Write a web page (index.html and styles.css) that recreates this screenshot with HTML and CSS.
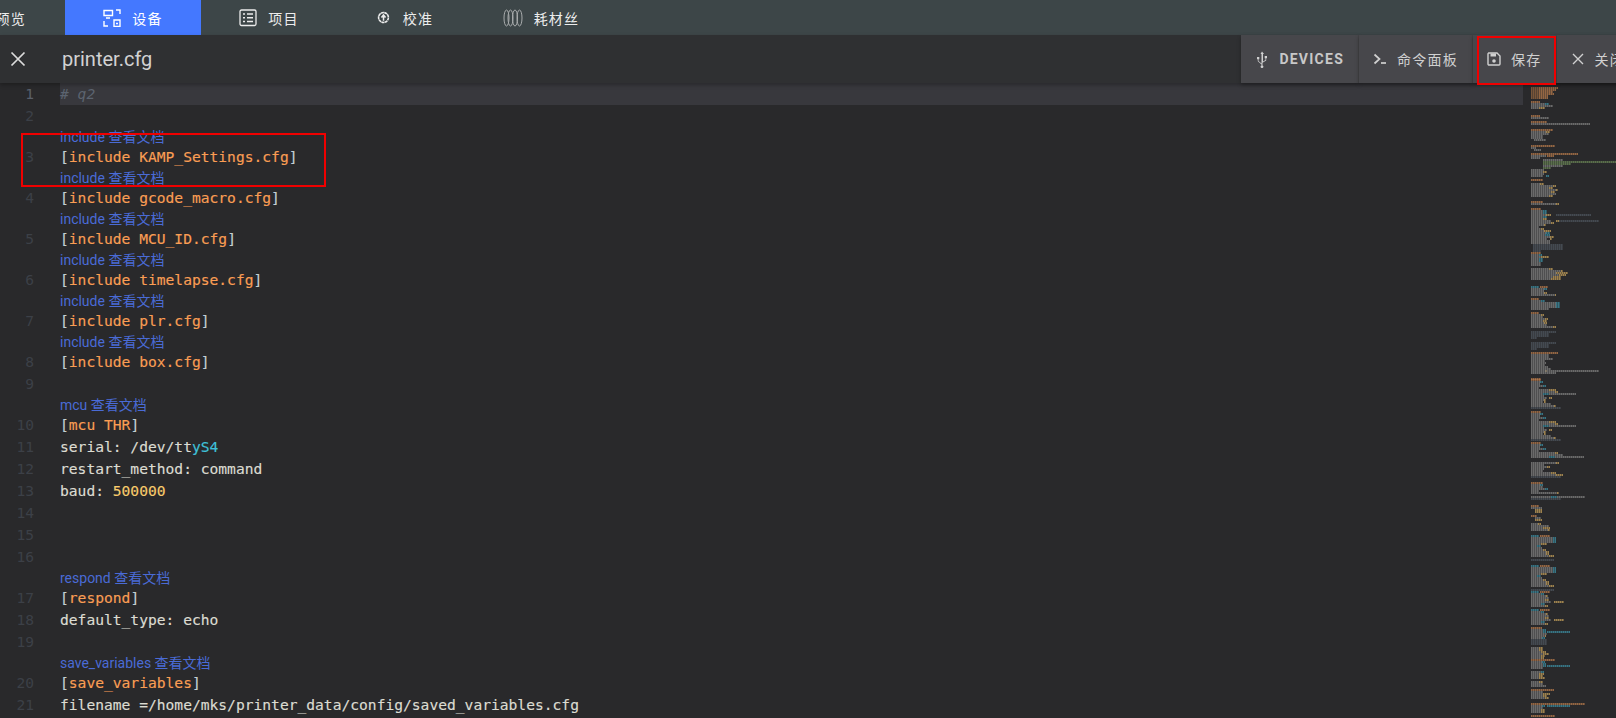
FILE: index.html
```html
<!DOCTYPE html>
<html lang="zh">
<head>
<meta charset="utf-8">
<title>printer.cfg</title>
<link rel="stylesheet" href="styles.css">
</head>
<body>
<nav class="nav">
  <a class="tab"><span class="label">预览</span></a>
  <a class="tab active">
    <svg class="nav-ico" viewBox="0 0 18 18" width="18" height="18"><path d="M1 1.500h8.500v5H1zM3 9h4M1 12v5h4M13 1h4v4M11 11h6v6.500h-6zM13 14.500h2" fill="none" stroke="currentColor" stroke-width="1.400"/></svg>
    <span class="label">设备</span></a>
  <a class="tab">
    <svg class="nav-ico" viewBox="0 0 18 18" width="18" height="18"><rect x="1" y="1" width="16" height="15.500" rx="1.500" fill="none" stroke="currentColor" stroke-width="1.300"/><path d="M4 5h2M8 5h6M4 8.700h2M8 8.700h6M4 12.500h2M8 12.500h6" stroke="currentColor" stroke-width="1.400"/></svg>
    <span class="label">项目</span></a>
  <a class="tab">
    <svg class="nav-ico small" viewBox="0 0 14 14" width="13" height="13"><circle cx="7" cy="7" r="5.300" fill="none" stroke="currentColor" stroke-width="1.700" stroke-dasharray="3.200 .4"/><path d="M7 10.500V5M4.800 7L7 4.200 9.200 7" fill="none" stroke="currentColor" stroke-width="1.600"/></svg>
    <span class="label">校准</span></a>
  <a class="tab">
    <svg class="nav-ico" viewBox="0 0 20 18" width="20" height="18"><g fill="none" stroke="#a9acad" stroke-width="1"><ellipse cx="3.500" cy="9" rx="2.500" ry="8"/><ellipse cx="7.500" cy="9" rx="2.500" ry="8"/><ellipse cx="12" cy="9" rx="2.500" ry="8"/><ellipse cx="16.500" cy="9" rx="2.500" ry="8"/></g></svg>
    <span class="label">耗材丝</span></a>
</nav>

<header class="toolbar">
  <button class="close-btn"><svg viewBox="0 0 16 16" width="16" height="16"><path d="M1.500 1.500l13 13M14.500 1.500l-13 13" stroke="#dcdcdc" stroke-width="1.700" fill="none"/></svg></button>
  <h1 class="file-title">printer.cfg</h1>
  <div class="actions">
    <button class="act"><svg class="act-ico" viewBox="0 0 18 18" width="18" height="18"><path d="M9 1.500L7.500 4h1v9.500L5.500 11V9.300h.8V7H4v2.300h.8v2l3.700 3.200v1.100a1.300 1.300 0 1 0 1 0V12.800l3.700-2.300V8.300h.8V6h-2.300v2.300h.8v1.800l-2.500 1.500V4h1z" fill="currentColor"/></svg><span class="strong">DEVICES</span></button>
    <button class="act"><svg class="act-ico" viewBox="0 0 18 18" width="18" height="18"><path d="M3.500 4.500L8.500 9l-5 4.500" fill="none" stroke="currentColor" stroke-width="1.700"/><path d="M10 13h5" stroke="currentColor" stroke-width="1.700"/></svg><span>命令面板</span></button>
    <button class="act"><svg class="act-ico" viewBox="0 0 18 18" width="18" height="18"><path d="M3.500 3h8.500l3 3v8a1 1 0 0 1-1 1h-10a1 1 0 0 1-1-1V4a1 1 0 0 1 .5-1z" fill="none" stroke="currentColor" stroke-width="1.400"/><path d="M5.500 3.500h5.500v3H5.500z" fill="currentColor"/><circle cx="9" cy="11" r="1.800" fill="currentColor"/></svg><span>保存</span></button>
    <button class="act"><svg class="act-ico" viewBox="0 0 18 18" width="18" height="18"><path d="M4 4l10 10M14 4L4 14" stroke="currentColor" stroke-width="1.400" fill="none"/></svg><span>关闭</span></button>
  </div>
</header>

<main class="editor">
  <div class="lines">
    <div class="row current"><span class="num on">1</span><code class="code"><i class="cm"># q2</i></code></div>
    <div class="row"><span class="num">2</span><code class="code"></code></div>
    <div class="lens">include 查看文档</div>
    <div class="row"><span class="num">3</span><code class="code"><b class="br">[</b><b class="sec">include KAMP_Settings.cfg</b><b class="br">]</b></code></div>
    <div class="lens">include 查看文档</div>
    <div class="row"><span class="num">4</span><code class="code"><b class="br">[</b><b class="sec">include gcode_macro.cfg</b><b class="br">]</b></code></div>
    <div class="lens">include 查看文档</div>
    <div class="row"><span class="num">5</span><code class="code"><b class="br">[</b><b class="sec">include MCU_ID.cfg</b><b class="br">]</b></code></div>
    <div class="lens">include 查看文档</div>
    <div class="row"><span class="num">6</span><code class="code"><b class="br">[</b><b class="sec">include timelapse.cfg</b><b class="br">]</b></code></div>
    <div class="lens">include 查看文档</div>
    <div class="row"><span class="num">7</span><code class="code"><b class="br">[</b><b class="sec">include plr.cfg</b><b class="br">]</b></code></div>
    <div class="lens">include 查看文档</div>
    <div class="row"><span class="num">8</span><code class="code"><b class="br">[</b><b class="sec">include box.cfg</b><b class="br">]</b></code></div>
    <div class="row"><span class="num">9</span><code class="code"></code></div>
    <div class="lens">mcu 查看文档</div>
    <div class="row"><span class="num">10</span><code class="code"><b class="br">[</b><b class="sec">mcu THR</b><b class="br">]</b></code></div>
    <div class="row"><span class="num">11</span><code class="code">serial: /dev/tt<b class="cy">yS4</b></code></div>
    <div class="row"><span class="num">12</span><code class="code">restart_method: command</code></div>
    <div class="row"><span class="num">13</span><code class="code">baud: <b class="nb">500000</b></code></div>
    <div class="row"><span class="num">14</span><code class="code"></code></div>
    <div class="row"><span class="num">15</span><code class="code"></code></div>
    <div class="row"><span class="num">16</span><code class="code"></code></div>
    <div class="lens">respond 查看文档</div>
    <div class="row"><span class="num">17</span><code class="code"><b class="br">[</b><b class="sec">respond</b><b class="br">]</b></code></div>
    <div class="row"><span class="num">18</span><code class="code">default_type: echo</code></div>
    <div class="row"><span class="num">19</span><code class="code"></code></div>
    <div class="lens">save_variables 查看文档</div>
    <div class="row"><span class="num">20</span><code class="code"><b class="br">[</b><b class="sec">save_variables</b><b class="br">]</b></code></div>
    <div class="row"><span class="num">21</span><code class="code">filename =/home/mks/printer_data/config/saved_variables.cfg</code></div>
  </div>
  <aside class="minimap">
    <svg viewBox="0 0 85 635" width="85" height="635">
      <defs>
        <g id="blk">
          <path class="o" d="M0 0h10"/>
          <path class="g" d="M0 2h9M0 4h9M0 6h12M0 8h8M0 10h18M0 12h24M0 14h12M18 14h27M0 16h13M0 18h16M0 20h13M0 22h12M0 24h20M0 26h23"/>
          <path class="c" d="M9 2h3M12 6h3M12 14h6"/>
          <path class="y" d="M18 10h7M24 12h3M18 18h3M13 20h2M13 22h2M23 26h2"/>
          <path class="d" d="M0 28h30"/>
        </g>
        <g id="tc">
          <path class="c" d="M0 0h8M22 2h3M22 4h3M22 6h3M6 10h4"/>
          <path class="o" d="M9 0h10"/>
          <path class="g" d="M0 2h22M0 4h22M0 6h22M0 8h10M0 10h6M0 12h11M0 14h12M0 16h15M0 18h15M0 20h18"/>
          <path class="y" d="M10 8h6M12 14h3M15 16h3M15 18h3M18 20h5"/>
          <path class="d" d="M0 24h23"/>
        </g>
        <g id="sc">
          <path class="c" d="M0 0h8M10 2h3M10 12h4"/>
          <path class="o" d="M9 0h10"/>
          <path class="g" d="M0 2h10M0 4h15M0 6h18M0 8h14M0 10h20M0 12h10M0 14h14"/>
          <path class="y" d="M15 4h2M14 8h4M23 10h10M14 14h3"/>
        </g>
      </defs>
      <path class="g" d="M1 1h5"/>
      <path class="o2" d="M0 5h8M0 7h8M0 9h8M0 11h8M0 13h8M0 15h8"/>
      <path class="o" d="M8 5h19M8 7h17M8 9h14M8 11h15M8 13h9M8 15h9M0 19h9M0 33h9M0 39h16M0 47h22M0 63h24M0 71h47M16 73h7M0 97h12M0 119h12M0 126h10M9 204h8M0 216h8M0 230h8M0 270h27M0 296h10"/>
      <path class="g" d="M0 21h14M0 23h22M0 25h8M0 35h18M0 41h59M0 49h15M0 51h18M0 53h12M0 55h12M3 57h12M0 65h5M3 67h7M0 73h15M0 75h9M12 77h20M12 83h20M0 87h13M0 89h12M0 91h13M0 93h12M0 101h9M0 103h22M0 105h18M0 107h25M0 109h20M0 111h25M0 113h18M0 121h25"/>
      <path class="c" d="M14 21h4M15 93h3M12 128h4M12 130h4M12 134h4M15 150h4M14 152h5M8 172h3M8 176h4M8 178h4M0 204h8M13 206h3M10 218h4M25 220h4M25 222h4M25 224h4"/>
      <path class="y" d="M8 25h6M15 49h4M12 89h4M9 101h4M22 103h3M18 105h4M25 107h2M20 109h4M18 113h4M25 121h3M15 132h5M12 136h4M25 138h3M20 140h3M13 142h2M10 146h3M13 148h7M19 154h4M19 156h2M10 174h8M18 186h4M30 188h2M25 190h12M28 192h7M22 194h8M20 196h10M13 210h3M24 212h1M10 232h3M14 236h3M12 238h4M13 240h3M22 244h3M14 288h2"/>
      <path class="gr" d="M12 79h73M12 81h28M12 85h8"/>
      <path class="g" d="M0 128h12M0 130h12M0 132h15M0 134h12M0 136h12M0 138h20M0 140h20M0 142h13M0 144h8M0 146h10M0 148h13M0 150h15M0 152h14M0 154h19M0 156h16M0 158h19M0 160h19M0 172h8M0 174h10M0 176h8M0 178h8M0 180h10M0 182h10M0 186h18M0 188h30M0 190h25M0 192h28M0 194h22M0 196h20M0 206h13M0 208h13M0 210h13M0 212h24M0 218h10M0 220h25M0 222h25M0 224h25M0 226h18M0 232h10M0 234h12M0 236h14M0 238h12M0 240h13M0 242h16M0 244h22M0 272h18M0 274h18M0 276h22M0 278h14M0 280h15M0 282h14M0 284h17M0 286h20M0 288h68M0 290h25"/>
      <path class="o" d="M0 170h10"/>
      <path class="d" d="M2 162h30M2 164h30M2 166h30M2 168h8M25 132h35M28 138h40M0 249h25M0 251h18M0 253h18M0 255h6M0 260h25M0 262h18M0 264h18M0 266h6"/>
      <use href="#blk" y="297"/><use href="#blk" y="329"/>
      <path class="o" d="M0 360h10M0 400h12M0 423h8M0 433h6"/>
      <path class="g" d="M0 362h9M0 364h9M0 366h12M0 368h8M0 370h24M0 372h32M0 374h18M24 374h29M0 380h25M0 382h13M0 384h16M0 386h13M0 388h12M0 390h20M0 392h25M0 402h9M0 404h12M0 406h14M0 408h8M0 410h26M0 414h20M26 414h28M0 425h11M4 435h6M0 441h7M0 443h18M0 445h12M0 447h17"/>
      <path class="c" d="M9 362h3M12 366h3M18 374h6M9 402h3M14 406h3M20 414h6"/>
      <path class="y" d="M24 370h3M25 380h3M16 384h3M20 390h5M25 392h7M26 410h2M4 427h7M4 429h7M4 437h7M7 441h3M12 445h7M17 447h2"/>
      <path class="d" d="M0 394h30M0 416h30"/>
      <use href="#tc" y="453"/><use href="#tc" y="483"/>
      <use href="#sc" y="509"/><use href="#sc" y="527"/>
      <path class="o" d="M0 545h11M0 577h24M0 607h23M0 621h54M0 633h24"/>
      <path class="g" d="M0 547h12M0 549h12M0 551h16M0 553h14M0 555h11M0 565h8M0 567h8M0 569h10M0 571h12M0 573h10M0 575h10M0 579h11M0 581h12M0 583h12M0 585h12M0 589h10M0 591h8M0 593h8M0 595h8M0 599h8M0 601h12M0 603h15M0 609h12M0 611h12M0 613h12M0 615h14M0 623h11M0 625h12M0 627h10M0 629h10"/>
      <path class="c" d="M12 547h3M12 549h3M16 549h23M11 555h3M11 579h3M12 581h3M12 583h3M16 583h23M10 589h3M11 623h3M16 623h23"/>
      <path class="y" d="M14 553h1M8 565h4M8 567h4M10 569h5M12 571h6M10 573h4M10 575h3M8 591h5M8 593h4M8 595h6M8 599h4M12 611h7M12 613h4M14 615h4M10 627h4M10 629h4"/>
      <path class="d" d="M0 557h16M0 559h16M0 561h16"/>
    </svg>
  </aside>
</main>

<div class="mark mark-code"></div>
<div class="mark mark-save"></div>
</body>
</html>
```
FILE: styles.css
```css
* { box-sizing: border-box; }
html, body { margin: 0; height: 100%; }
body {
  width: 1616px;
  height: 718px;
  overflow: hidden;
  position: relative;
  background: #29292b;
  font-family: Roboto, "Noto Sans CJK SC", sans-serif;
  color: #e6e6e6;
}
.nav {
  display: flex;
  height: 35px;
  margin-left: -71px;
  background: #3d4648;
}
.tab {
  flex: 0 0 136px;
  display: flex;
  align-items: center;
  justify-content: center;
  gap: 11px;
  font-size: 14px;
  letter-spacing: 1.25px;
  color: #ececec;
}
.tab.active { background: #4478ff; color: #fff; }
.tab:first-child { justify-content: flex-end; padding-right: 39px; }
.nav-ico { flex: none; }
.nav-ico.small { margin-right: 2px; }
.label { white-space: nowrap; }

.toolbar {
  display: flex;
  align-items: stretch;
  height: 48px;
  width: 1640px;
  background: #2f3032;
  box-shadow: 0 2px 4px rgba(0, 0, 0, .28);
  position: relative;
  z-index: 2;
}
.close-btn {
  width: 62px;
  border: 0;
  padding: 0 0 0 10px;
  background: none;
  display: flex;
  align-items: center;
}
.file-title {
  flex: 1;
  margin: 0;
  font-size: 20px;
  font-weight: 400;
  line-height: 48px;
  color: #d2d2d2;
}
.actions { display: flex; }
.act {
  display: flex;
  align-items: center;
  flex: none;
  height: 48px;
  padding: 0 14px 0 12px;
  border: 0;
  border-right: 1px solid #424245;
  background: #47474b;
  color: #d0d0d0;
  font: 400 14px Roboto, "Noto Sans CJK SC", sans-serif;
  letter-spacing: 1.25px;
  white-space: nowrap;
  box-shadow: 0 2px 4px rgba(0, 0, 0, .3);
}
.act-ico { margin-right: 8px; flex: none; }
.strong { font-weight: 700; color: #c8c8c8; }

.editor { display: flex; height: 635px; overflow: hidden; }
.lines { flex: 1; min-width: 0; font-family: "DejaVu Sans Mono", monospace; font-size: 14.62px; }
.row { display: flex; height: 22px; line-height: 22px; }
.num {
  flex: 0 0 60px;
  padding-right: 26px;
  text-align: right;
  color: #3c4047;
}
.num.on { color: #5a606b; }
.code { flex: 1; font: inherit; white-space: pre; color: #dcdcd2; -webkit-text-stroke: .15px currentColor; }
.code b { font-weight: 400; }
.current .code { background: #38383d; -webkit-text-stroke: 0; }
.cm { color: #5c6470; font-style: italic; }
.br { color: #c4d0d4; }
.sec { color: #fa9e54; }
.cy { color: #3fc0d8; }
.nb { color: #f8cc6c; }
.lens {
  height: 19px;
  line-height: 21px;
  padding-left: 60px;
  font-family: Roboto, "Noto Sans CJK SC", sans-serif;
  font-size: 14px;
  color: #4a6bd6;
  white-space: nowrap;
}
.minimap { flex: 0 0 93px; padding-left: 8px; }
.minimap svg { display: block; fill: none; stroke-width: 1.7; stroke-dasharray: 1.6 .4; }
.g { stroke: #808080; }
.o { stroke: #b87b4c; }
.o2 { stroke: #94663f; }
.y { stroke: #c4a05b; }
.c { stroke: #3c8fa4; }
.gr { stroke: #6b8757; }
.d { stroke: #4e555f; }

.mark { position: absolute; border: 2px solid #f00000; }
.mark-code { left: 21px; top: 133px; width: 305px; height: 54px; }
.mark-save { left: 1477px; top: 36px; width: 79px; height: 49px; z-index: 3; }
```
